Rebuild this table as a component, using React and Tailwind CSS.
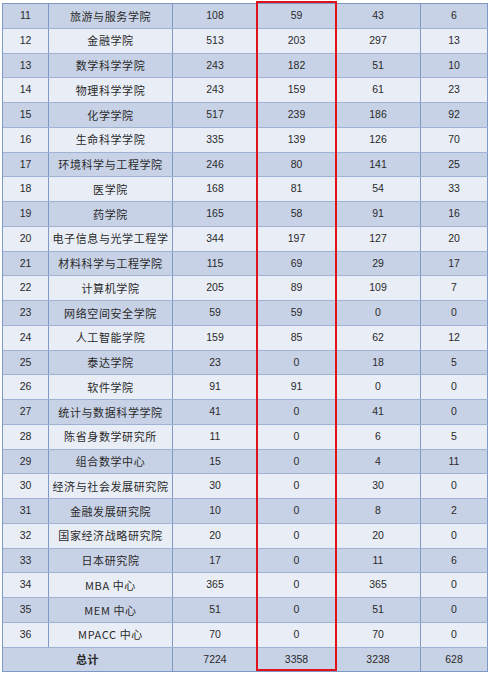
import React from "react";

const rows = [
  [11, "旅游与服务学院", 108, 59, 43, 6],
  [12, "金融学院", 513, 203, 297, 13],
  [13, "数学科学学院", 243, 182, 51, 10],
  [14, "物理科学学院", 243, 159, 61, 23],
  [15, "化学学院", 517, 239, 186, 92],
  [16, "生命科学学院", 335, 139, 126, 70],
  [17, "环境科学与工程学院", 246, 80, 141, 25],
  [18, "医学院", 168, 81, 54, 33],
  [19, "药学院", 165, 58, 91, 16],
  [20, "电子信息与光学工程学", 344, 197, 127, 20],
  [21, "材料科学与工程学院", 115, 69, 29, 17],
  [22, "计算机学院", 205, 89, 109, 7],
  [23, "网络空间安全学院", 59, 59, 0, 0],
  [24, "人工智能学院", 159, 85, 62, 12],
  [25, "泰达学院", 23, 0, 18, 5],
  [26, "软件学院", 91, 91, 0, 0],
  [27, "统计与数据科学学院", 41, 0, 41, 0],
  [28, "陈省身数学研究所", 11, 0, 6, 5],
  [29, "组合数学中心", 15, 0, 4, 11],
  [30, "经济与社会发展研究院", 30, 0, 30, 0],
  [31, "金融发展研究院", 10, 0, 8, 2],
  [32, "国家经济战略研究院", 20, 0, 20, 0],
  [33, "日本研究院", 17, 0, 11, 6],
  [34, "MBA 中心", 365, 0, 365, 0],
  [35, "MEM 中心", 51, 0, 51, 0],
  [36, "MPACC 中心", 70, 0, 70, 0],
];

const num = "flex items-center justify-center border-r border-[#7f99c6] text-[10.5px] font-['Liberation_Sans',sans-serif]";
const cjk = "flex items-center justify-center border-r border-[#7f99c6] text-[11px] tracking-[0.6px] font-['Noto_Sans_CJK_SC','Noto_Sans',sans-serif]";

export default function App() {
  return (
    <div className="relative w-[489px] h-[673px] bg-white pt-[3px] pl-[2px] overflow-hidden text-[#2a2a2a]">
      <div className="w-[486px] border-l border-t border-[#7f99c6]">
        {rows.map((r, i) => (
          <div
            key={r[0]}
            className={
              "grid grid-cols-[46px_124px_85px_78px_85px_67px] h-[24.75px] border-b border-[#9fb2d4] " +
              (i % 2 === 0 ? "bg-[#c8d2e6]" : "bg-[#e8edf6]")
            }
          >
            <div className={num}>{r[0]}</div>
            <div className={cjk}>{r[1]}</div>
            <div className={num}>{r[2]}</div>
            <div className={num}>{r[3]}</div>
            <div className={num}>{r[4]}</div>
            <div className={num}>{r[5]}</div>
          </div>
        ))}
        <div className="grid grid-cols-[46px_124px_85px_78px_85px_67px] h-[24.75px] border-b border-[#7f99c6] bg-[#c8d2e6]">
          <div className={cjk + " col-span-2 font-bold"}>总计</div>
          <div className={num}>7224</div>
          <div className={num}>3358</div>
          <div className={num}>3238</div>
          <div className={num}>628</div>
        </div>
      </div>
      <div className="absolute left-[256px] top-[1px] w-[81px] h-[670px] border-2 border-[#e0131b] pointer-events-none" />
    </div>
  );
}
